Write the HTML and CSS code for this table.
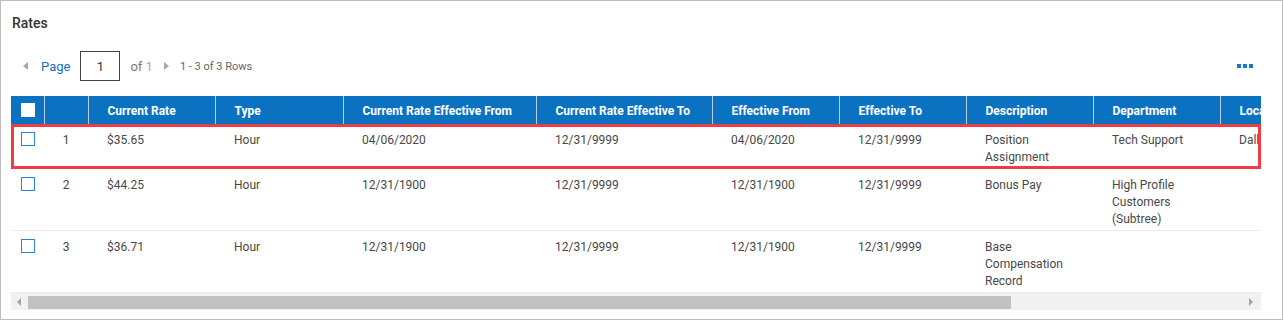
FILE: index.html
```html
<!DOCTYPE html>
<html>
<head>
<meta charset="utf-8">
<link rel="stylesheet" href="styles.css">
</head>
<body>
<div class="panel">
  <div class="title">Rates</div>
  <div class="toolbar">
    <div class="pager">
      <span class="tri tri-left"></span>
      <span class="page-label">Page</span>
      <span class="page-input">1</span>
      <span class="of">of <span class="of-num">1</span></span>
      <span class="tri tri-right"></span>
      <span class="rows">1 - 3 of 3 Rows</span>
    </div>
    <div class="more"><span></span><span></span><span></span></div>
  </div>
  <div class="grid-wrap">
    <table class="grid">
      <colgroup>
        <col class="c-chk"><col class="c-num"><col class="c-127"><col class="c-128"><col class="c-193"><col class="c-176"><col class="c-127"><col class="c-127"><col class="c-127"><col class="c-127"><col class="c-127"><col class="c-209">
      </colgroup>
      <thead>
        <tr>
          <th class="chk"><span class="hbox"></span></th>
          <th></th>
          <th>Current Rate</th>
          <th>Type</th>
          <th>Current Rate Effective From</th>
          <th>Current Rate Effective To</th>
          <th>Effective From</th>
          <th>Effective To</th>
          <th>Description</th>
          <th>Department</th>
          <th>Location</th>
          <th>Job</th>
        </tr>
      </thead>
      <tbody>
        <tr>
          <td class="chk"><span class="box"></span></td>
          <td class="num">1</td>
          <td>$35.65</td>
          <td>Hour</td>
          <td>04/06/2020</td>
          <td>12/31/9999</td>
          <td>04/06/2020</td>
          <td>12/31/9999</td>
          <td>Position Assignment</td>
          <td>Tech Support</td>
          <td>Dallas</td>
          <td></td>
        </tr>
        <tr>
          <td class="chk"><span class="box"></span></td>
          <td class="num">2</td>
          <td>$44.25</td>
          <td>Hour</td>
          <td>12/31/1900</td>
          <td>12/31/9999</td>
          <td>12/31/1900</td>
          <td>12/31/9999</td>
          <td>Bonus Pay</td>
          <td>High Profile Customers (Subtree)</td>
          <td></td>
          <td></td>
        </tr>
        <tr>
          <td class="chk"><span class="box"></span></td>
          <td class="num">3</td>
          <td>$36.71</td>
          <td>Hour</td>
          <td>12/31/1900</td>
          <td>12/31/9999</td>
          <td>12/31/1900</td>
          <td>12/31/9999</td>
          <td>Base Compensation Record</td>
          <td></td>
          <td></td>
          <td></td>
        </tr>
      </tbody>
    </table>
    <div class="highlight"></div>
  </div>
  <div class="hscroll">
    <span class="arrow arrow-left"></span>
    <div class="thumb"></div>
    <span class="arrow arrow-right"></span>
  </div>
</div>
</body>
</html>
```

FILE: styles.css
```css
* { box-sizing: border-box; }
html, body { margin: 0; padding: 0; background: #fff; }
body { font-family: Roboto, "Liberation Sans", Arial, sans-serif; color: #444; }

.panel {
  width: 1283px;
  height: 320px;
  border: 1px solid #bcbcbc;
  padding: 0 21px 0 10px;
  overflow: hidden;
}

.title {
  padding-top: 12px;
  height: 31px;
  line-height: 20px;
  font-size: 14px;
  font-weight: 500;
  color: #333;
  padding-left: 1px;
}

.toolbar {
  margin-top: 19px;
  height: 30px;
  display: flex;
  align-items: center;
  justify-content: space-between;
}

.pager {
  display: flex;
  align-items: center;
  height: 30px;
  font-size: 13px;
}

.tri {
  width: 0;
  height: 0;
  border-top: 4px solid transparent;
  border-bottom: 4px solid transparent;
}
.tri-left { margin-left: 12px; border-right: 5px solid #a8a8a8; }
.tri-right { margin-left: 11px; border-left: 5px solid #a8a8a8; }

.page-label { margin-left: 13px; color: #1470c4; }

.page-input {
  margin-left: 10px;
  width: 40px;
  height: 30px;
  border: 1px solid #444;
  display: flex;
  align-items: center;
  justify-content: center;
  color: #333;
  font-size: 13px;
}

.of { margin-left: 10px; color: #777; }
.of-num { color: #aaa; }

.rows { margin-left: 11px; font-size: 11px; color: #666; }

.more {
  display: flex;
  gap: 2px;
  margin-right: 8px;
}
.more span {
  width: 4px;
  height: 4px;
  background: #1a78c9;
}

.grid-wrap {
  margin-top: 15px;
  width: 1250px;
  overflow: hidden;
  position: relative;
}

.grid {
  border-collapse: collapse;
  table-layout: fixed;
  width: 1545px;
  font-size: 12px;
}

.c-chk { width: 33px; }
.c-num { width: 44px; }
.c-127 { width: 127px; }
.c-128 { width: 128px; }
.c-193 { width: 193px; }
.c-176 { width: 176px; }
.c-209 { width: 209px; }

.grid th {
  background: #0b72c2;
  color: #fff;
  font-weight: 700;
  text-align: left;
  height: 28px;
  padding: 1px 6px 0 19px;
  border-left: 1px solid #b9cfe6;
  white-space: nowrap;
  overflow: hidden;
  line-height: 16px;
}
.grid th:first-child { border-left: none; }

.grid td {
  vertical-align: top;
  padding: 8px 10px 2px 19px;
  line-height: 17px;
  border-bottom: 1px solid #ececec;
  color: #484848;
}

.grid th.chk, .grid td.chk { padding: 0 0 0 10px; }
.grid th.chk { vertical-align: middle; }
.grid td.chk { padding-top: 8px; }
.grid td.num { text-align: center; padding-left: 0; padding-right: 0; }

.hbox {
  display: block;
  width: 14px;
  height: 14px;
  background: #fff;
}

.box {
  display: block;
  width: 14px;
  height: 14px;
  border: 1px solid #2c83d4;
  background: #fff;
}

.highlight {
  position: absolute;
  left: 0;
  top: 28px;
  width: 1250px;
  height: 45px;
  border: 3px solid #ef3b44;
  pointer-events: none;
}

.hscroll {
  width: 1250px;
  height: 17px;
  background: #f1f1f1;
  display: flex;
  align-items: center;
  position: relative;
}

.thumb {
  position: absolute;
  left: 17px;
  top: 3px;
  width: 983px;
  height: 13px;
  background: #c1c1c1;
}

.arrow {
  width: 0;
  height: 0;
  border-top: 4px solid transparent;
  border-bottom: 4px solid transparent;
}
.arrow-left { margin-left: 6px; border-right: 4px solid #a3a3a3; }
.arrow-right { margin-left: auto; margin-right: 8px; border-left: 4px solid #a3a3a3; }
```
